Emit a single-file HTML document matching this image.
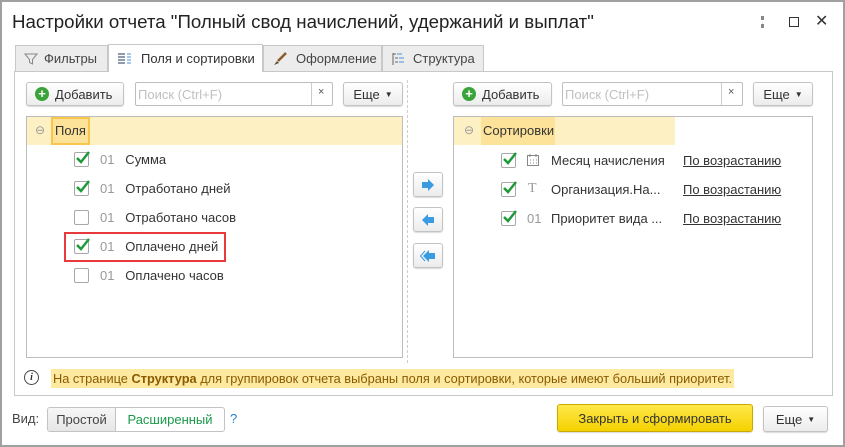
<!DOCTYPE html>
<html><head><meta charset="utf-8"><style>
*{box-sizing:border-box;margin:0;padding:0}
body{width:845px;height:447px;overflow:hidden;background:#fff;font-family:"Liberation Sans",sans-serif;font-size:13px;color:#333;position:relative}
.a{position:absolute}
.win{left:0;top:0;width:845px;height:447px;border:2px solid #a0a0a0}
.btn{position:absolute;background:linear-gradient(#fff,#ececec);border:1px solid #c3c3c3;border-radius:3px;box-shadow:0 1px 1px rgba(0,0,0,.15);font-size:13px;color:#333;display:flex;align-items:center}
.tab{position:absolute;top:45px;height:26px;background:#ececec;border:1px solid #c8c8c8;border-bottom:none;display:flex;align-items:center;font-size:13px;color:#444}
.cb{position:absolute;width:15px;height:15px;border:1px solid #a8a8a8;border-radius:2px;background:#fff}
.row{position:absolute;font-size:13px;color:#333}
.g{color:#999}
.lnk{color:#333;text-decoration:underline}
.plus{width:14px;height:14px;border-radius:50%;background:#3aa33a;color:#fff;font-weight:bold;font-size:13px;line-height:14px;text-align:center;margin:0 6px 0 8px}
</style></head><body>
<div class="a win"></div>
<div class="a" style="left:12px;top:11px;font-size:18.7px;color:#222">Настройки отчета "Полный свод начислений, удержаний и выплат"</div>
<div class="a" style="left:761px;top:16px;width:3px;height:12px;border-left:3px dotted #888"></div>
<div class="a" style="left:789px;top:17px;width:10px;height:10px;border:1.5px solid #333"></div>
<div class="a" style="left:815px;top:11px;font-size:16px;color:#333">✕</div>

<div class="a" style="left:14px;top:71px;width:819px;height:325px;border:1px solid #c8c8c8"></div>
<div class="tab" style="left:15px;width:93px;padding-left:8px"><svg width="14" height="14" style="margin-right:6px"><path d="M1 2h12L8.5 7.5V12L5.5 10.5V7.5Z" fill="none" stroke="#888"/></svg>Фильтры</div>
<div class="tab" style="left:108px;top:44px;width:155px;height:28px;background:#fff;padding-left:8px;color:#333"><svg width="16" height="14" style="margin-right:8px"><path d="M1 2h7M1 5h7M1 8h7M1 11h7" stroke="#6a7a90" stroke-width="1.5"/><path d="M11 1v12M13 1v12" stroke="#4a90d9" stroke-dasharray="2 1"/></svg>Поля и сортировки</div>
<div class="tab" style="left:263px;width:119px;padding-left:8px"><svg width="16" height="14" style="margin-right:8px"><path d="M2 13L5 9l2 2Z" fill="#553"/><path d="M6 9L14 1" stroke="#8b5a2b" stroke-width="2.5"/></svg>Оформление</div>
<div class="tab" style="left:382px;width:102px;padding-left:8px"><svg width="14" height="14" style="margin-right:8px"><path d="M2 1v12M2 2h3M4 6h3M4 10h3" stroke="#666" fill="none"/><path d="M8 6h5M8 10h5M6 2h5" stroke="#4a90d9"/></svg>Структура</div>

<div class="btn" style="left:26px;top:82px;width:98px;height:24px"><span class="plus">+</span>Добавить</div>
<div class="a" style="left:135px;top:82px;width:198px;height:24px;border:1px solid #bdbdbd;border-radius:2px"><span style="position:absolute;left:2px;top:4px;color:#c0c0c0">Поиск (Ctrl+F)</span><span style="position:absolute;left:175px;top:0;width:1px;height:22px;background:#ccc"></span><span style="position:absolute;left:182px;top:3px;font-size:11px;color:#555">×</span></div>
<div class="btn" style="left:343px;top:82px;width:60px;height:24px;justify-content:center">Еще <span style="font-size:8px;margin-left:5px">▼</span></div>

<div class="a" style="left:407px;top:80px;height:283px;border-left:1px dashed #ccc"></div>

<div class="a" style="left:26px;top:116px;width:377px;height:242px;border:1px solid #bdbdbd"></div>
<div class="a" style="left:27px;top:117px;width:375px;height:28px;background:#fdf1c3"></div>
<div class="a" style="left:51px;top:117px;width:39px;height:28px;background:#fde39a;border:2px solid #f8c64a"></div>
<div class="a" style="left:35px;top:123px;color:#999;font-size:12px">⊖</div>
<div class="row" style="left:55px;top:123px">Поля</div>

<div class="cb" style="left:74px;top:152px"></div><svg class="a" style="left:75px;top:150px" width="15" height="15"><path d="M2 8l4 4 8-10" stroke="#1f9a3a" stroke-width="2.5" fill="none"/></svg>
<div class="row" style="left:100px;top:152px"><span class="g">01</span>&nbsp;&nbsp;&nbsp;Сумма</div>
<div class="cb" style="left:74px;top:181px"></div><svg class="a" style="left:75px;top:179px" width="15" height="15"><path d="M2 8l4 4 8-10" stroke="#1f9a3a" stroke-width="2.5" fill="none"/></svg>
<div class="row" style="left:100px;top:181px"><span class="g">01</span>&nbsp;&nbsp;&nbsp;Отработано дней</div>
<div class="cb" style="left:74px;top:210px"></div>
<div class="row" style="left:100px;top:210px"><span class="g">01</span>&nbsp;&nbsp;&nbsp;Отработано часов</div>
<div class="a" style="left:64px;top:232px;width:162px;height:30px;border:2px solid #e8393c"></div>
<div class="cb" style="left:74px;top:239px"></div><svg class="a" style="left:75px;top:237px" width="15" height="15"><path d="M2 8l4 4 8-10" stroke="#1f9a3a" stroke-width="2.5" fill="none"/></svg>
<div class="row" style="left:100px;top:239px"><span class="g">01</span>&nbsp;&nbsp;&nbsp;Оплачено дней</div>
<div class="cb" style="left:74px;top:268px"></div>
<div class="row" style="left:100px;top:268px"><span class="g">01</span>&nbsp;&nbsp;&nbsp;Оплачено часов</div>

<div class="btn" style="left:413px;top:172px;width:30px;height:25px;justify-content:center"><svg width="14" height="14"><path d="M1 4h6V1l6 6-6 6v-3H1Z" fill="#3a9be0"/></svg></div>
<div class="btn" style="left:413px;top:207px;width:30px;height:25px;justify-content:center"><svg width="14" height="14"><path d="M13 4H7V1L1 7l6 6v-3h6Z" fill="#3a9be0"/></svg></div>
<div class="btn" style="left:413px;top:243px;width:30px;height:25px;justify-content:center"><svg width="16" height="14"><path d="M15 4H9V1L3 7l6 6v-3h6Z" fill="#3a9be0"/><path d="M5 2L0.5 7 5 12" stroke="#3a9be0" fill="none"/></svg></div>

<div class="btn" style="left:453px;top:82px;width:99px;height:24px"><span class="plus">+</span>Добавить</div>
<div class="a" style="left:562px;top:82px;width:181px;height:24px;border:1px solid #bdbdbd;border-radius:2px"><span style="position:absolute;left:2px;top:4px;color:#c0c0c0">Поиск (Ctrl+F)</span><span style="position:absolute;left:158px;top:0;width:1px;height:22px;background:#ccc"></span><span style="position:absolute;left:165px;top:3px;font-size:11px;color:#555">×</span></div>
<div class="btn" style="left:753px;top:82px;width:60px;height:24px;justify-content:center">Еще <span style="font-size:8px;margin-left:5px">▼</span></div>

<div class="a" style="left:453px;top:116px;width:360px;height:242px;border:1px solid #bdbdbd"></div>
<div class="a" style="left:454px;top:117px;width:221px;height:28px;background:#fdf1c3"></div>
<div class="a" style="left:481px;top:117px;width:74px;height:28px;background:#fde39a"></div>
<div class="a" style="left:464px;top:123px;color:#999;font-size:12px">⊖</div>
<div class="row" style="left:483px;top:123px">Сортировки</div>

<div class="cb" style="left:501px;top:153px"></div><svg class="a" style="left:502px;top:151px" width="15" height="15"><path d="M2 8l4 4 8-10" stroke="#1f9a3a" stroke-width="2.5" fill="none"/></svg>
<svg class="a" style="left:527px;top:154px" width="12" height="12"><rect x="0.5" y="1.5" width="11" height="10" fill="none" stroke="#888"/><path d="M3 0v3M9 0v3" stroke="#888"/><path d="M3 6h1M6 6h1M9 6h1M3 9h1M6 9h1M9 9h1" stroke="#888"/></svg>
<div class="row" style="left:551px;top:153px">Месяц начисления</div>
<div class="row lnk" style="left:683px;top:153px">По возрастанию</div>
<div class="cb" style="left:501px;top:182px"></div><svg class="a" style="left:502px;top:180px" width="15" height="15"><path d="M2 8l4 4 8-10" stroke="#1f9a3a" stroke-width="2.5" fill="none"/></svg>
<div class="row g" style="left:528px;top:181px;font-family:'Liberation Serif',serif;font-size:14px">T</div>
<div class="row" style="left:551px;top:182px">Организация.На...</div>
<div class="row lnk" style="left:683px;top:182px">По возрастанию</div>
<div class="cb" style="left:501px;top:211px"></div><svg class="a" style="left:502px;top:209px" width="15" height="15"><path d="M2 8l4 4 8-10" stroke="#1f9a3a" stroke-width="2.5" fill="none"/></svg>
<div class="row g" style="left:527px;top:211px">01</div>
<div class="row" style="left:551px;top:211px">Приоритет вида ...</div>
<div class="row lnk" style="left:683px;top:211px">По возрастанию</div>

<div class="a" style="left:24px;top:370px;width:15px;height:15px;border:1.3px solid #444;border-radius:50%;font-size:10px;text-align:center;line-height:13px;font-family:'Liberation Serif',serif;font-style:italic;font-weight:bold">i</div>
<div class="a" style="left:51px;top:369px;height:19px;background:#fde9a0;color:#8a5a00;font-size:12.8px;line-height:19px;padding:0 2px;white-space:nowrap">На странице <b>Структура</b> для группировок отчета выбраны поля и сортировки, которые имеют больший приоритет.</div>

<div class="a" style="left:12px;top:411px;color:#444">Вид:</div>
<div class="a" style="left:47px;top:407px;width:178px;height:25px;border:1px solid #c3c3c3;border-radius:3px;overflow:hidden;display:flex">
<div style="width:68px;background:linear-gradient(#f6f6f6,#e6e6e6);border-right:1px solid #c3c3c3;text-align:center;line-height:23px;color:#444">Простой</div>
<div style="flex:1;text-align:center;line-height:23px;color:#1a9a4a">Расширенный</div></div>
<div class="a" style="left:230px;top:411px;color:#2a7fd0">?</div>
<div class="btn" style="left:557px;top:404px;width:196px;height:28px;justify-content:center;background:linear-gradient(#ffe84a,#f4d100);border-color:#c9ab00;color:#333">Закрыть и сформировать</div>
<div class="btn" style="left:763px;top:406px;width:65px;height:26px;justify-content:center">Еще <span style="font-size:8px;margin-left:5px">▼</span></div>
</body></html>
